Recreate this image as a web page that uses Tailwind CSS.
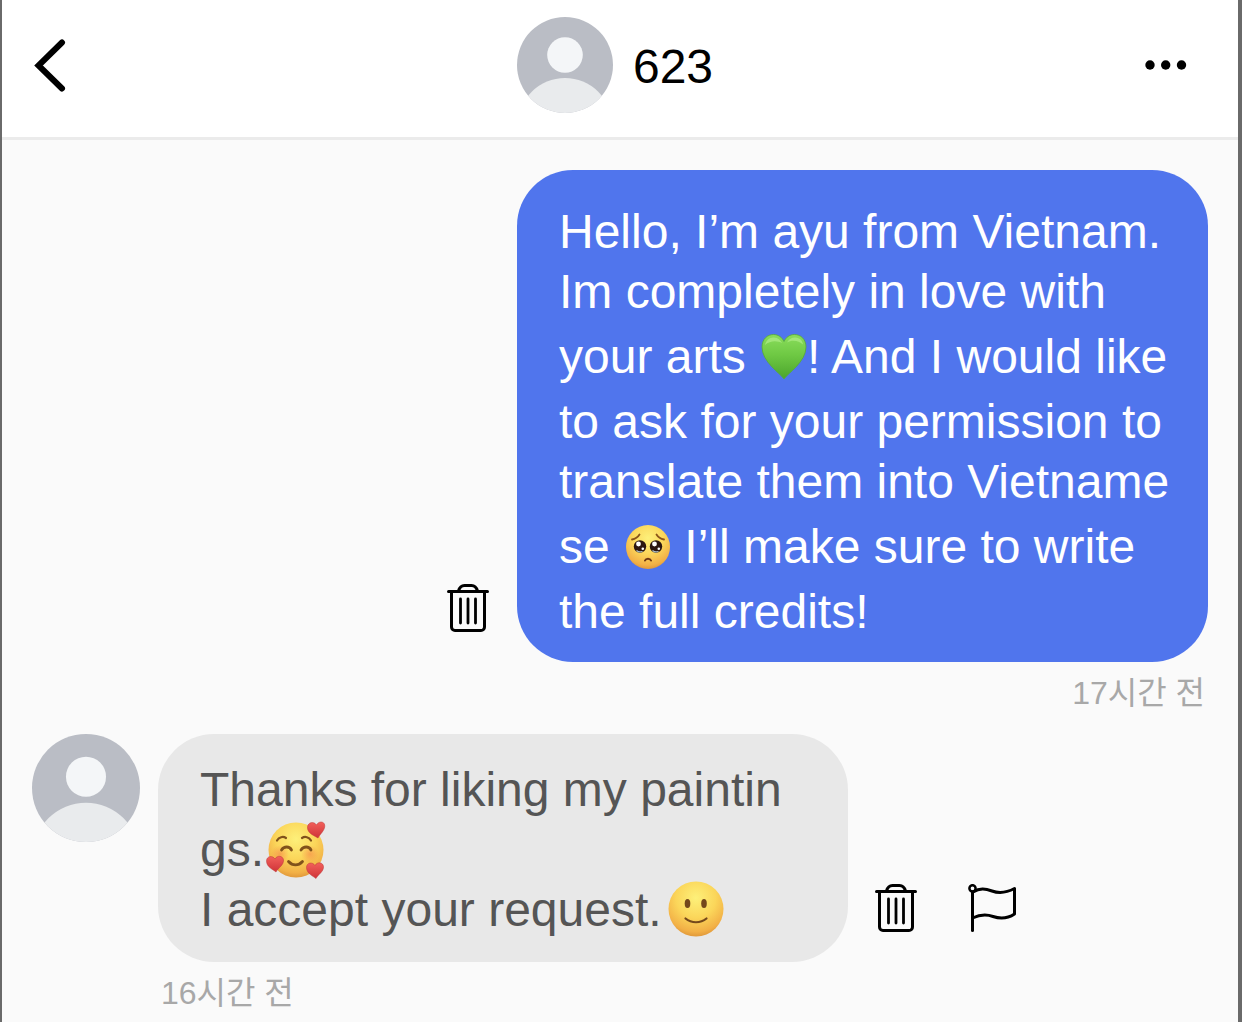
<!DOCTYPE html>
<html lang="ko">
<head>
    <meta charset="UTF-8">
    <meta name="viewport" content="width=device-width, initial-scale=1.0">
    <title>623</title>
    <script src="https://cdn.jsdelivr.net/npm/@tailwindcss/browser@4"></script>
</head>
<body class="bg-[#fafafa] font-['Liberation_Sans','Noto_Sans_CJK_KR',sans-serif] text-black">
    <!-- Shared shapes -->
    <svg class="absolute size-0" aria-hidden="true">
        <defs>
            <clipPath id="avatar-clip"><circle cx="48" cy="48" r="48"/></clipPath>
            <symbol id="avatar" viewBox="0 0 96 96">
                <g clip-path="url(#avatar-clip)">
                    <rect width="96" height="96" fill="#babdc5"/>
                    <circle cx="48" cy="38" r="17.8" fill="#f4f6f8"/>
                    <circle cx="48" cy="108" r="47" fill="#e9ebed"/>
                </g>
            </symbol>
            <symbol id="trash" viewBox="0 0 42 48">
                <g fill="none" stroke="#000" stroke-width="3" stroke-linecap="round" stroke-linejoin="round">
                    <path d="M1.5 7.5h39"/>
                    <path d="M11.5 7C12.5 3.5 14.5 1.5 17.5 1.5h7C27.5 1.5 29.5 3.5 30.5 7"/>
                    <path d="M4.5 8v35a3.5 3.5 0 0 0 3.5 3.5h26a3.5 3.5 0 0 0 3.5-3.5V8"/>
                    <path d="M13.5 15v24M21 15v24M28.5 15v24" stroke-width="2.8"/>
                </g>
            </symbol>
            <radialGradient id="face" cx=".5" cy=".3" r=".72">
                <stop offset="0" stop-color="#fdf07a"/>
                <stop offset=".5" stop-color="#fbd65a"/>
                <stop offset=".85" stop-color="#f2b046"/>
                <stop offset="1" stop-color="#dd9438"/>
            </radialGradient>
            <linearGradient id="green" x2="0" y2="1">
                <stop offset="0" stop-color="#8add5c"/>
                <stop offset=".45" stop-color="#6fc944"/>
                <stop offset="1" stop-color="#4ba52d"/>
            </linearGradient>
            <linearGradient id="red" x2="0" y2="1">
                <stop offset="0" stop-color="#f2605a"/>
                <stop offset="1" stop-color="#cf3338"/>
            </linearGradient>
            <radialGradient id="blush">
                <stop offset="0" stop-color="#f5854a" stop-opacity=".6"/>
                <stop offset="1" stop-color="#f5854a" stop-opacity="0"/>
            </radialGradient>
        </defs>
    </svg>

    <div class="min-h-screen border-l-2 border-r-4 border-[#6a6a6a]">
        <!-- Header -->
        <header class="grid grid-cols-[1fr_auto_1fr] items-center border-b-3 border-[#ebebeb] bg-white pt-[17px] pb-6">
            <button type="button" aria-label="Back" class="ml-8 justify-self-start">
                <svg class="h-[54px] w-8" viewBox="0 0 32 54" fill="none" stroke="#000" stroke-width="6" stroke-linecap="round">
                    <path d="M28 4.500L4.500 27.500 28 50.500" stroke-linejoin="miter"/>
                </svg>
            </button>
            <div class="flex items-center gap-5 pr-[10px]">
                <svg class="size-24"><use href="#avatar"/></svg>
                <h1 class="pt-1 text-[48px] leading-[60px]">623</h1>
            </div>
            <button type="button" aria-label="More" class="mr-[51px] justify-self-end">
                <svg class="h-[10px] w-[42px]" viewBox="0 0 42 10">
                    <circle cx="5" cy="5" r="4.7"/><circle cx="20.7" cy="5" r="4.7"/><circle cx="36.5" cy="5" r="4.7"/>
                </svg>
            </button>
        </header>

        <main class="px-[30px] pt-[30px]">
            <!-- Sent message -->
            <div class="flex items-end justify-end gap-7">
                <button type="button" aria-label="Delete" class="mb-[30px]">
                    <svg class="h-12 w-[42px]"><use href="#trash"/></svg>
                </button>
                <p class="w-[691px] rounded-[56px] bg-[#5075ed] pt-8 pb-5 pl-[42px] text-[48px] leading-[60px] whitespace-nowrap text-white">
                    <span class="block">Hello, I’m ayu from Vietnam.</span>
                    <span class="block">Im completely in love with</span>
                    <span class="block leading-[70px]">your arts <svg class="-my-2 inline size-12 align-baseline" viewBox="0 0 48 48" role="img" aria-label="green heart">
                            <path d="M25 46C21 40 3 29 3 14 3 6 8.500 1.500 14.500 1.500c5 0 8.700 3 10.500 7 1.800-4 5.500-7 10.500-7C41.500 1.500 47 6 47 14c0 15-18 26-22 32z" fill="url(#green)" stroke="#55a83a" stroke-width=".8"/>
                            <path d="M6 12c1-5 5-8 9-7.500 4 .3 6.500 2.500 8 5.500-4-2.500-12-3-17 2zM28 9.500c2-3.500 5-5.200 8.500-5 4 .3 7 3 7.500 7-4-4-11-5-16-2z" fill="#b4ee8d" opacity=".65"/>
                        </svg>! And I would like</span>
                    <span class="block">to ask for your permission to</span>
                    <span class="block">translate them into Vietname</span>
                    <span class="block leading-[70px]">se <svg class="-my-2 inline size-12 align-baseline" viewBox="0 0 48 48" role="img" aria-label="pleading face">
                            <circle cx="25" cy="24" r="22" fill="url(#face)"/>
                            <g fill="none" stroke="#8a5419" stroke-width="1.8" stroke-linecap="round">
                                <path d="M9 16.500c3-.5 6-2.500 7.500-5M41 16.500c-3-.5-6-2.500-7.500-5"/>
                                <path d="M22 37.500c1-2.500 5-2.500 6 0" stroke="#6b3513" stroke-width="2"/>
                            </g>
                            <circle cx="17" cy="23.500" r="6.200" fill="#2c1710"/><circle cx="33" cy="23.500" r="6.200" fill="#2c1710"/>
                            <g fill="#fff">
                                <circle cx="15.500" cy="21" r="2.400"/><circle cx="31.500" cy="21" r="2.400"/>
                                <circle cx="19.800" cy="25.800" r="1.300"/><circle cx="35.800" cy="25.800" r="1.300"/>
                            </g>
                            <path d="M13.500 27.500c2 1.500 4.500 1.600 6 .7M29.500 27.500c2 1.500 4.500 1.600 6 .7" fill="none" stroke="#a9bfc9" stroke-width="1.200"/>
                        </svg> I’ll make sure to write</span>
                    <span class="block">the full credits!</span>
                </p>
            </div>
            <time class="mt-[11px] mr-[3px] block text-right text-[32px] leading-[40px] text-[#a8a8a8]">17시간 전</time>

            <!-- Received message -->
            <div class="mt-[21px] flex items-end">
                <svg class="mr-[18px] size-[108px] shrink-0 self-start"><use href="#avatar"/></svg>
                <p class="w-[690px] rounded-[56px] bg-[#e8e8e8] pt-[26px] pb-[22px] pl-[42px] text-[48px] leading-[60px] whitespace-nowrap text-[#555]">
                    <span class="block">Thanks for liking my paintin</span>
                    <span class="block">gs.<svg class="mx-[2px] -my-2 inline size-[60px] align-[-6px]" viewBox="0 0 60 60" role="img" aria-label="smiling face with hearts">
                            <circle cx="30" cy="30" r="27.500" fill="url(#face)"/>
                            <circle cx="14" cy="34" r="9" fill="url(#blush)"/><circle cx="44" cy="34" r="9" fill="url(#blush)"/>
                            <g fill="none" stroke="#80521b" stroke-width="2.200" stroke-linecap="round">
                                <path d="M11 20.500c2-3.500 6-4.500 9-2.500M36 18c3-2 7-1 9 2.500"/>
                                <path d="M15.500 30c2.500-4 8-4 10 0M35 30c2.500-4 8-4 10 0" stroke-width="2.800"/>
                                <path d="M22.500 41.500c4 4.500 10 4.500 14 0" stroke-width="2.800"/>
                            </g>
                            <g fill="url(#red)" stroke="#bd3536" stroke-width=".5">
                                <path d="M52 18c-3-2-11-4.500-10.500-11 .4-5 6.500-6 9-2 2-4 7.500-4 8.200 0C59.500 10 54 14 52 18z"/>
                                <path d="M10 52c-3-2.500-9.500-5-9.500-11 0-5 6-6 8.500-2 2-4 8-3.500 8.500 1 .5 5-5.500 8-7.500 12z"/>
                                <path d="M50 58.500c-3-2.500-9.500-5-9.500-11 0-5 6-6 8.500-2 2-4 8-3.500 8.500 1 .5 5-5.500 8-7.500 12z"/>
                            </g>
                        </svg></span>
                    <span class="block">I accept your request.<svg class="mx-[2px] -my-2 inline size-[60px] align-[-6px]" viewBox="0 0 60 60" role="img" aria-label="slightly smiling face">
                            <circle cx="32" cy="29" r="27.500" fill="url(#face)"/>
                            <ellipse cx="23.500" cy="23.500" rx="2.800" ry="4.500" fill="#74481b"/><ellipse cx="40" cy="23.500" rx="2.800" ry="4.500" fill="#74481b"/>
                            <path d="M21.500 38.500c6 5 15 5 21 0" fill="none" stroke="#74481b" stroke-width="2.200" stroke-linecap="round"/>
                        </svg></span>
                </p>
                <button type="button" aria-label="Delete" class="mb-[30px] ml-[27px]">
                    <svg class="h-12 w-[42px]"><use href="#trash"/></svg>
                </button>
                <button type="button" aria-label="Report" class="mb-[30px] ml-[51px]">
                    <svg class="h-12 w-[50px]" viewBox="0 0 50 48" fill="none" stroke="#000" stroke-width="3" stroke-linecap="round" stroke-linejoin="round">
                        <circle cx="4.500" cy="4.300" r="3.100" stroke-width="2.500"/>
                        <path d="M4.500 8v38.500"/>
                        <path d="M5 8C12 4 17 4.500 24 7s14 2 22.500-2.500V30C39 35 32 35 25 32.500s-13-2-20.500 1.500"/>
                    </svg>
                </button>
            </div>
            <time class="mt-[11px] ml-[129px] block text-[32px] leading-[40px] text-[#a8a8a8]">16시간 전</time>
        </main>
    </div>
</body>
</html>
